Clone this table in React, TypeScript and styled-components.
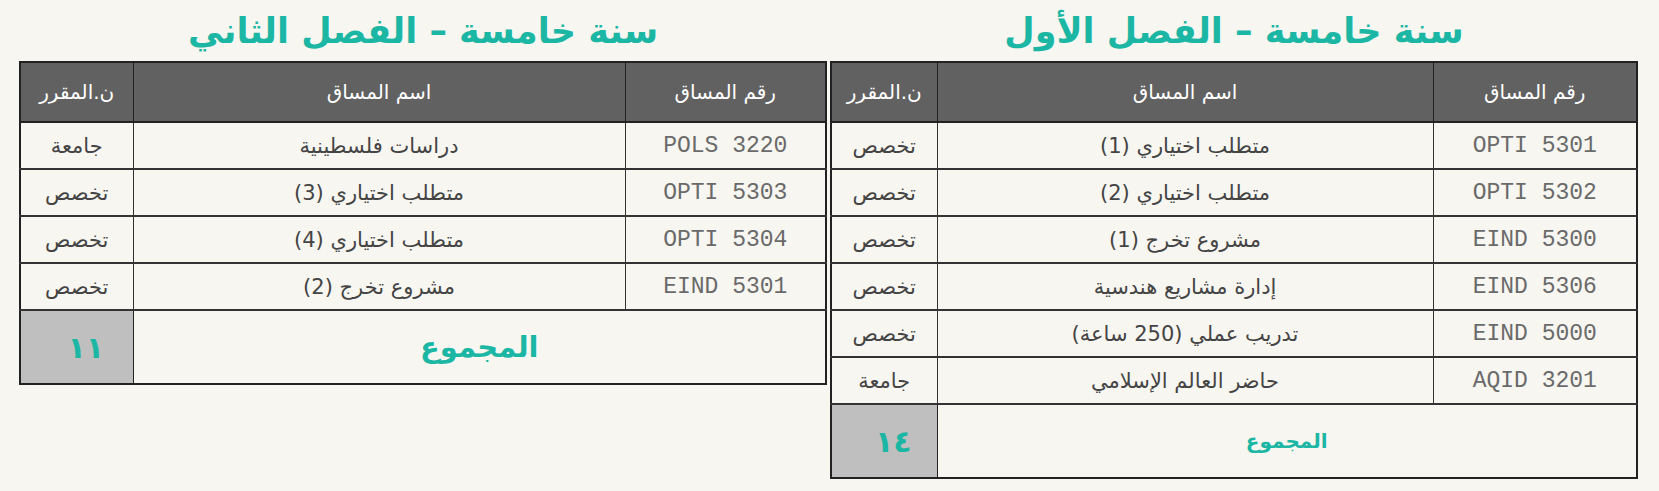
import React from 'react';
import styled, { createGlobalStyle } from 'styled-components';

const GlobalStyle = createGlobalStyle`
  html, body {
    margin: 0;
    padding: 0;
    background: #f7f6f1;
  }
  body {
    font-family: "DejaVu Sans", "Noto Sans", sans-serif;
  }
`;

const teal = '#1cb7a4';

type Course = { code: string; name: string; kind: string };

const semesters: { title: string; total: string; big: boolean; courses: Course[] }[] = [
  {
    title: 'سنة خامسة – الفصل الأول',
    total: '١٤',
    big: false,
    courses: [
      { code: 'OPTI 5301', name: 'متطلب اختياري (1)', kind: 'تخصص' },
      { code: 'OPTI 5302', name: 'متطلب اختياري (2)', kind: 'تخصص' },
      { code: 'EIND 5300', name: 'مشروع تخرج (1)', kind: 'تخصص' },
      { code: 'EIND 5306', name: 'إدارة مشاريع هندسية', kind: 'تخصص' },
      { code: 'EIND 5000', name: 'تدريب عملي (250 ساعة)', kind: 'تخصص' },
      { code: 'AQID 3201', name: 'حاضر العالم الإسلامي', kind: 'جامعة' },
    ],
  },
  {
    title: 'سنة خامسة – الفصل الثاني',
    total: '١١',
    big: true,
    courses: [
      { code: 'POLS 3220', name: 'دراسات فلسطينية', kind: 'جامعة' },
      { code: 'OPTI 5303', name: 'متطلب اختياري (3)', kind: 'تخصص' },
      { code: 'OPTI 5304', name: 'متطلب اختياري (4)', kind: 'تخصص' },
      { code: 'EIND 5301', name: 'مشروع تخرج (2)', kind: 'تخصص' },
    ],
  },
];

const Page = styled.div`
  direction: rtl;
  display: flex;
  gap: 3px;
  padding: 0 21px 0 19px;
  align-items: flex-start;
`;

const Column = styled.section`
  flex: 1;
  display: flex;
  flex-direction: column;
`;

const Title = styled.h2`
  margin: 0;
  height: 61px;
  display: flex;
  align-items: center;
  justify-content: center;
  color: ${teal};
  font-size: 35px;
  font-weight: bold;
`;

const Table = styled.table`
  width: 100%;
  border-collapse: collapse;
  border: 2px solid #222;
  table-layout: fixed;
`;

const HeadCell = styled.th`
  height: 58px;
  padding: 0;
  background: #616161;
  color: #fff;
  font-weight: normal;
  font-size: 20px;
  text-align: center;
  border: 1px solid #222;
  border-bottom: 2px solid #222;
`;

const Cell = styled.td<{ $mono?: boolean }>`
  height: 45px;
  padding: 0;
  text-align: center;
  border: 1px solid #333;
  border-bottom: 2px solid #333;
  color: ${(p) => (p.$mono ? '#6a6a6a' : '#444')};
  font-family: ${(p) => (p.$mono ? '"Liberation Mono", "Courier New", monospace' : '"DejaVu Sans", sans-serif')};
  font-size: ${(p) => (p.$mono ? '23px' : '21px')};
  direction: ${(p) => (p.$mono ? 'ltr' : 'rtl')};
`;

const TotalLabel = styled.td<{ $big: boolean }>`
  height: 72px;
  padding: 0;
  text-align: center;
  border: 1px solid #222;
  color: ${teal};
  font-weight: bold;
  font-size: ${(p) => (p.$big ? '29px' : '20px')};
`;

const TotalValue = styled.td`
  padding: 0 0 0 18px;
  text-align: center;
  background: #bfbfbf;
  border: 1px solid #222;
  color: ${teal};
  font-weight: bold;
  font-size: 30px;
`;

function Semester({ title, total, big, courses }: (typeof semesters)[number]) {
  return (
    <Column>
      <Title>{title}</Title>
      <Table>
        <colgroup>
          <col style={{ width: big ? 201 : 204 }} />
          <col />
          <col style={{ width: big ? 113 : 106 }} />
        </colgroup>
        <thead>
          <tr>
            <HeadCell>رقم المساق</HeadCell>
            <HeadCell>اسم المساق</HeadCell>
            <HeadCell>ن.المقرر</HeadCell>
          </tr>
        </thead>
        <tbody>
          {courses.map((c) => (
            <tr key={c.code}>
              <Cell $mono>{c.code}</Cell>
              <Cell>{c.name}</Cell>
              <Cell>{c.kind}</Cell>
            </tr>
          ))}
          <tr>
            <TotalLabel colSpan={2} $big={big}>المجموع</TotalLabel>
            <TotalValue>{total}</TotalValue>
          </tr>
        </tbody>
      </Table>
    </Column>
  );
}

export default function App() {
  return (
    <>
      <GlobalStyle />
      <Page>
        {semesters.map((s) => (
          <Semester key={s.title} {...s} />
        ))}
      </Page>
    </>
  );
}
